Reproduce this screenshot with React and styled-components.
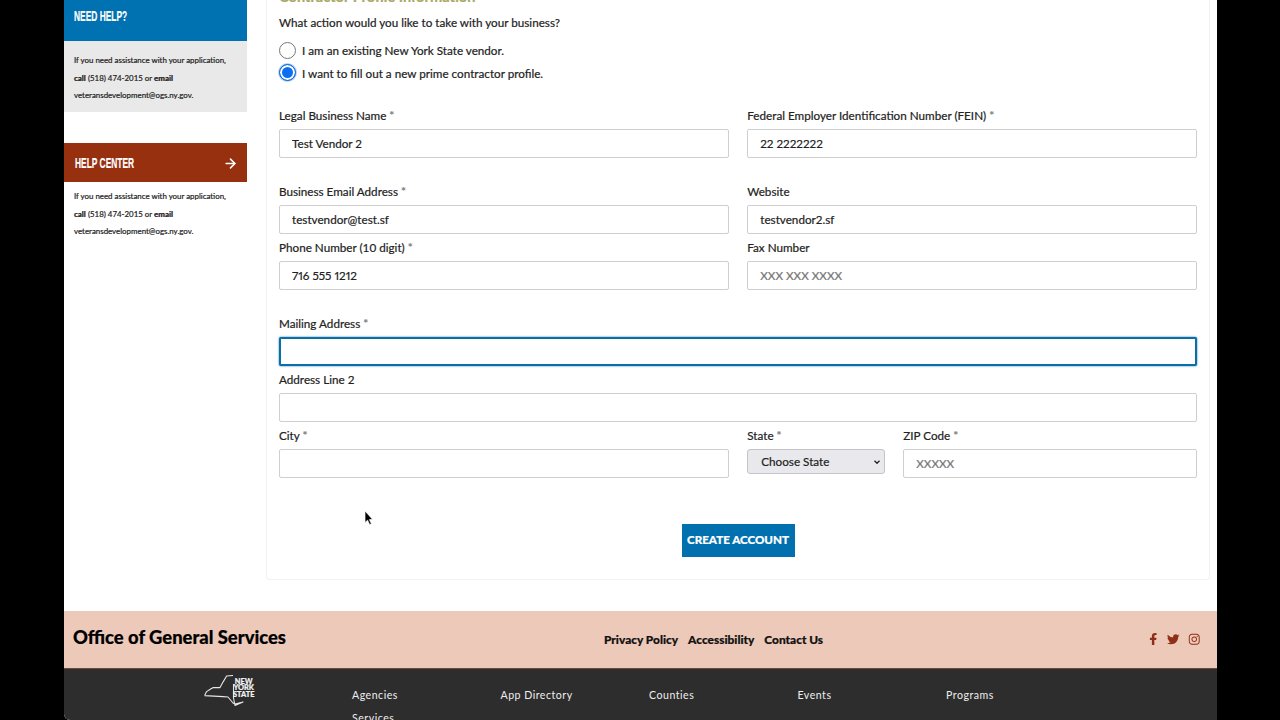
import styled, { createGlobalStyle } from "styled-components";
import { FaFacebookF, FaTwitter, FaInstagram } from "react-icons/fa";
import { ArrowRight } from "lucide-react";

const GlobalStyle = createGlobalStyle`
  html, body {
    margin: 0;
    height: 100%;
    background: #000;
    overflow: hidden;
  }
  body, input, select, button {
    font-family: "Lato", "Open Sans", sans-serif;
  }
`;

const Shell = styled.div`
  position: relative;
  width: 1153px;
  height: 720px;
  margin-left: 64px;
  background: #fff;
  overflow: hidden;
  border-bottom-left-radius: 6px;
  -webkit-text-stroke: 0.2px;
`;

/* the page is scrolled a little, so the top of it is cut off */
const Scrolled = styled.div`
  margin-top: -20px;
`;

const Columns = styled.div`
  display: flex;
  gap: 19px;
  padding-right: 7px;
`;

const Sidebar = styled.aside`
  width: 183px;
  flex: none;
`;

const SideHead = styled.div`
  display: flex;
  align-items: center;
  justify-content: space-between;
  box-sizing: border-box;
  height: ${(p) => p.$h}px;
  padding: ${(p) => p.$pad};
  background: ${(p) => p.$bg};
  color: #fff;
`;

/* no condensed face is installed, so the heading is squeezed */
const SideTitle = styled.span`
  display: inline-block;
  font-family: "Liberation Sans", sans-serif;
  font-size: 14px;
  font-weight: 700;
  white-space: nowrap;
  transform: scaleX(0.6);
  transform-origin: left center;
`;

const SideText = styled.div`
  padding: ${(p) => p.$pad};
  background: ${(p) => p.$bg || "transparent"};
  height: ${(p) => p.$h}px;
  box-sizing: border-box;
  font-size: 7.9px;
  line-height: 17.5px;
  color: #222;
  b {
    font-weight: 900;
  }
`;

const HelpCenter = styled.section`
  margin-top: 31px;
`;

const Card = styled.main`
  flex: 1;
  box-sizing: border-box;
  height: 600px;
  padding: 0 12px;
  border: 1px solid #f2f2f2;
  border-top: none;
  border-radius: 3px;
`;

const Title = styled.h2`
  margin: 0;
  padding-top: 7px;
  height: 29px;
  box-sizing: border-box;
  font-size: 14.6px;
  line-height: 20px;
  font-weight: 700;
  color: #a8a866;
`;

const Question = styled.p`
  margin: 0 0 4px;
  font-size: 11.7px;
  line-height: 26px;
  color: #222;
`;

const RadioRow = styled.label`
  display: flex;
  align-items: center;
  gap: 6px;
  height: 22.5px;
  font-size: 11.7px;
  color: #222;
`;

const Radio = styled.input`
  appearance: none;
  box-sizing: border-box;
  width: 17px;
  height: 17px;
  margin: 0;
  border-radius: 50%;
  border: 1.5px solid #777;
  background: #fff;
  &:checked {
    border: 1.5px solid #0b6bd6;
    background: #0b6ff0;
    box-shadow: inset 0 0 0 2px #fff, 0 0 0 1px #bcd6f5;
  }
`;

const Grid = styled.div`
  display: grid;
  grid-template-columns: ${(p) => p.$cols || "1fr 1fr"};
  column-gap: 18.5px;
  margin-top: ${(p) => p.$top || 0}px;
`;

const Field = styled.div`
  min-width: 0;
`;

const Label = styled.label`
  display: block;
  height: 20px;
  margin-bottom: 4px;
  font-size: 11.7px;
  line-height: 20px;
  color: #222;
  i {
    font-style: normal;
    color: #777;
  }
`;

const Input = styled.input`
  display: block;
  box-sizing: border-box;
  width: 100%;
  height: 29px;
  padding: 0 12px 2px;
  border: 1px solid #cfcfcf;
  border-radius: 2px;
  background: #fff;
  font-size: 11.7px;
  font-variant-numeric: proportional-nums;
  color: #222;
  outline: none;
  &::placeholder {
    color: #777;
    opacity: 1;
  }
  ${(p) =>
    p.$focus &&
    `
    border: 2px solid #0a6fa8;
    box-shadow: 0 0 2px #0a6fa8;
  `}
`;

const Select = styled.select`
  display: block;
  appearance: none;
  box-sizing: border-box;
  width: 100%;
  height: 25px;
  padding: 0 13px 2px;
  border: 1px solid #c4c4c8;
  border-radius: 3px;
  background: #e9e9ed
    url("data:image/svg+xml,%3Csvg xmlns='http://www.w3.org/2000/svg' width='8' height='6'%3E%3Cpath d='M1.5 1.8l2.5 2.5 2.5-2.5' fill='none' stroke='%23222' stroke-width='1.3'/%3E%3C/svg%3E")
    no-repeat right 3px center;
  font-size: 11.7px;
  color: #222;
`;

const Actions = styled.div`
  display: flex;
  justify-content: center;
  margin-top: 46px;
`;

const Submit = styled.button`
  width: 113px;
  height: 33px;
  padding: 0 0 2px;
  border: none;
  background: #0071ae;
  color: #fff;
  font-size: 11.6px;
  font-weight: 900;
`;

const ContactBar = styled.div`
  display: grid;
  grid-template-columns: 531px auto 1fr;
  align-items: center;
  box-sizing: border-box;
  height: 58px;
  margin-top: 31px;
  padding: 0 17px 0 9px;
  background: #ecc9b8;
  border-bottom: 1px solid #6b4a3c;
`;

const Office = styled.div`
  font-size: 18.4px;
  font-weight: 900;
  color: #000;
  padding-bottom: 6px;
`;

const LegalLinks = styled.nav`
  display: flex;
  gap: 10px;
  font-size: 11.9px;
  font-weight: 900;
  color: #111;
`;

const Social = styled.div`
  display: flex;
  justify-content: flex-end;
  align-items: center;
  gap: 8px;
  padding-bottom: 1px;
  color: #8f2f17;
  font-size: 12.5px;
`;

const DarkFooter = styled.div`
  display: flex;
  height: 52px;
  padding-top: 6px;
  box-sizing: border-box;
  background: #2d2d2d;
  overflow: hidden;
`;

const LogoSlot = styled.div`
  flex: none;
  width: 288px;
  padding-left: 140px;
  box-sizing: border-box;
`;

const LogoWrap = styled.div`
  position: relative;
  width: 52px;
  height: 33px;
  span {
    position: absolute;
    left: 29px;
    top: 4px;
    font-size: 7.4px;
    line-height: 6.4px;
    font-weight: 900;
    color: #f2f2f2;
    white-space: pre-line;
    text-align: center;
  }
`;

const FooterLinks = styled.nav`
  display: grid;
  grid-template-columns: repeat(5, 148.5px);
  grid-auto-rows: 23px;
  padding-top: 12px;
  font-size: 10.6px;
  line-height: 16px;
  letter-spacing: 0.5px;
  color: #eee;
  -webkit-text-stroke: 0;
`;

const Pointer = styled.svg`
  position: absolute;
  left: 300px;
  top: 510px;
  width: 10px;
  height: 16px;
`;

const footerItems = ["Agencies", "App Directory", "Counties", "Events", "Programs", "Services"];

const Req = () => <i> *</i>;

const HelpLines = () => (
  <>
    If you need assistance with your application,
    <br />
    <b>call</b> (518) 474-2015 or <b>email</b>
    <br />
    veteransdevelopment@ogs.ny.gov.
  </>
);

export default function App() {
  return (
    <>
      <GlobalStyle />
      <Shell>
        <Scrolled>
          <Columns>
            <Sidebar>
              <SideHead $bg="#0071b1" $h={61} $pad="10px 10px 0">
                <SideTitle>NEED HELP?</SideTitle>
              </SideHead>
              <SideText $bg="#e9e9e9" $h={71} $pad="11px 10px 0">
                <HelpLines />
              </SideText>
              <HelpCenter>
                <SideHead $bg="#96300f" $h={39} $pad="1px 9px 0 11px">
                  <SideTitle>HELP CENTER</SideTitle>
                  <ArrowRight size={15} strokeWidth={2.5} />
                </SideHead>
                <SideText $pad="6px 10px 0">
                  <HelpLines />
                </SideText>
              </HelpCenter>
            </Sidebar>
            <Card>
              <Title>Contractor Profile Information</Title>
              <Question>What action would you like to take with your business?</Question>
              <RadioRow>
                <Radio type="radio" name="action" />I am an existing New York State vendor.
              </RadioRow>
              <RadioRow>
                <Radio type="radio" name="action" defaultChecked />I want to fill out a new prime contractor profile.
              </RadioRow>

              <Grid $top={21}>
                <Field>
                  <Label>Legal Business Name<Req /></Label>
                  <Input defaultValue="Test Vendor 2" />
                </Field>
                <Field>
                  <Label>Federal Employer Identification Number (FEIN)<Req /></Label>
                  <Input defaultValue="22 2222222" />
                </Field>
              </Grid>
              <Grid $top={23}>
                <Field>
                  <Label>Business Email Address<Req /></Label>
                  <Input defaultValue="testvendor@test.sf" />
                </Field>
                <Field>
                  <Label>Website</Label>
                  <Input defaultValue="testvendor2.sf" />
                </Field>
              </Grid>
              <Grid $top={3}>
                <Field>
                  <Label>Phone Number (10 digit)<Req /></Label>
                  <Input defaultValue="716 555 1212" />
                </Field>
                <Field>
                  <Label>Fax Number</Label>
                  <Input placeholder="XXX XXX XXXX" />
                </Field>
              </Grid>
              <Grid $top={23} $cols="1fr">
                <Field>
                  <Label>Mailing Address<Req /></Label>
                  <Input $focus />
                </Field>
              </Grid>
              <Grid $top={3} $cols="1fr">
                <Field>
                  <Label>Address Line 2</Label>
                  <Input />
                </Field>
              </Grid>
              <Grid $top={3} $cols="449.75px 137.5px 1fr">
                <Field>
                  <Label>City<Req /></Label>
                  <Input />
                </Field>
                <Field>
                  <Label>State<Req /></Label>
                  <Select defaultValue="">
                    <option value="">Choose State</option>
                  </Select>
                </Field>
                <Field>
                  <Label>ZIP Code<Req /></Label>
                  <Input placeholder="XXXXX" />
                </Field>
              </Grid>
              <Actions>
                <Submit>CREATE ACCOUNT</Submit>
              </Actions>
            </Card>
          </Columns>

          <ContactBar>
            <Office>Office of General Services</Office>
            <LegalLinks>
              <span>Privacy Policy</span>
              <span>Accessibility</span>
              <span>Contact Us</span>
            </LegalLinks>
            <Social>
              <FaFacebookF />
              <FaTwitter />
              <FaInstagram />
            </Social>
          </ContactBar>
          <DarkFooter>
            <LogoSlot>
              <LogoWrap>
                <svg width="52" height="33" viewBox="0 0 52 33" fill="none" stroke="#e6e6e6" strokeWidth="1.1" strokeLinejoin="round">
                  <path d="M0.6 20.6 L2.6 16.6 L6.6 14 L9.3 12.6 L16 12.6 L19.3 6.6 L22.6 1 L29 0.5 M29.5 9 L29.5 23 L31 30.5 L39 27 L31 29 L29 28 L24 22 L19 21.6 L0.6 20.6" />
                </svg>
                <span>{"NEW\nYORK\nSTATE"}</span>
              </LogoWrap>
            </LogoSlot>
            <FooterLinks>
              {footerItems.map((item) => (
                <span key={item}>{item}</span>
              ))}
            </FooterLinks>
          </DarkFooter>
        </Scrolled>
        <Pointer viewBox="0 0 10 16">
          <path d="M1 1 L1 12.5 L3.6 10.2 L5.6 14.6 L7.4 13.8 L5.4 9.6 L8.6 9.4 Z" fill="#000" stroke="#fff" strokeWidth="0.7" />
        </Pointer>
      </Shell>
    </>
  );
}
